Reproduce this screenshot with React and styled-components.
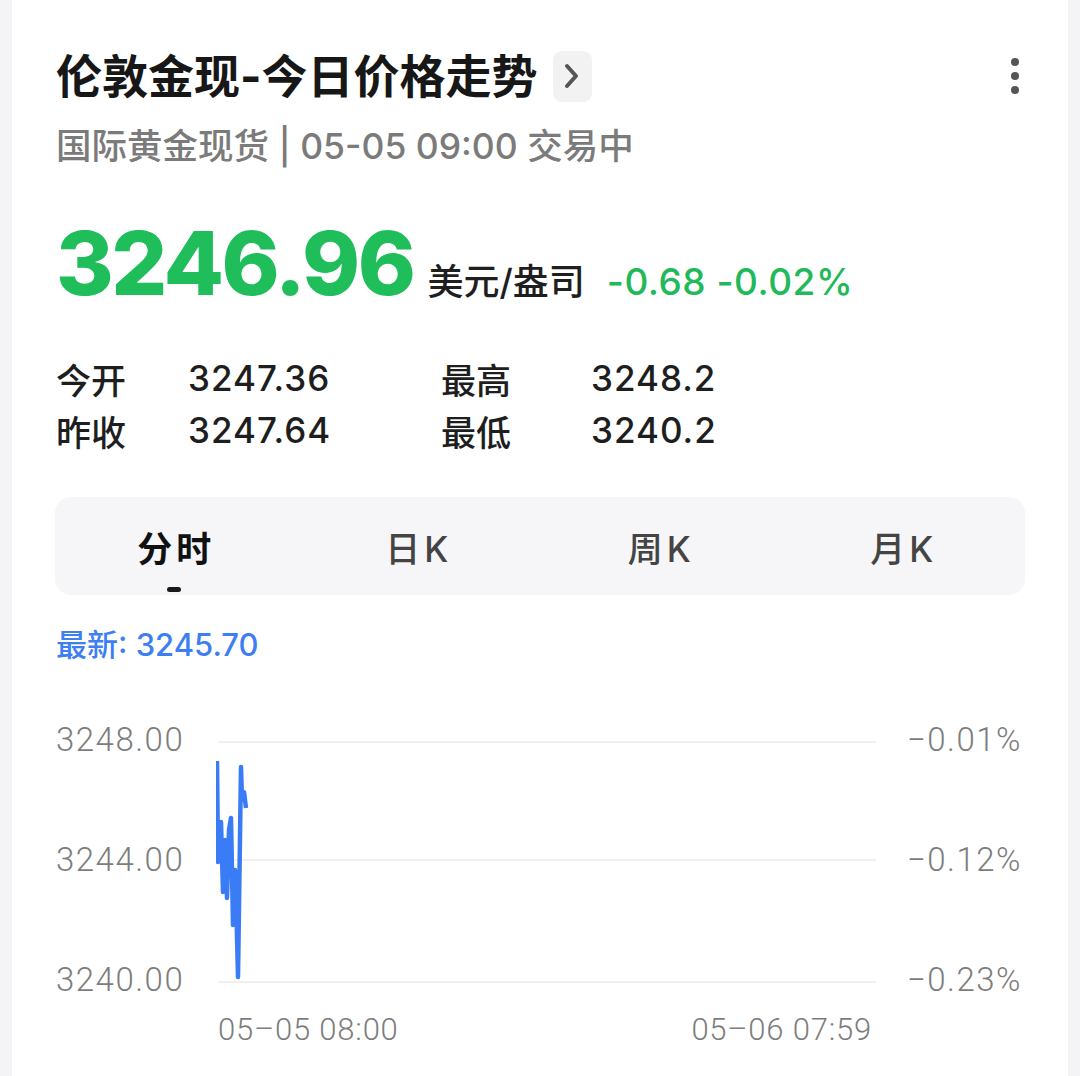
import React from "react";
import styled, { createGlobalStyle } from "styled-components";

const Global = createGlobalStyle`
  html, body { margin: 0; padding: 0; background: #f4f4f6; }
  body { font-family: Inter, "Noto Sans CJK SC", sans-serif; }
`;

const Card = styled.div`
  margin-left: 12px;
  width: 1056px;
  min-height: 1076px;
  box-sizing: border-box;
  background: #ffffff;
  padding: 50px 46px 0 44px;
  display: flex;
  flex-direction: column;
`;

const HeaderRow = styled.div`
  display: flex;
  align-items: center;
  justify-content: space-between;
  height: 52px;
`;

const TitleGroup = styled.div`
  display: flex;
  align-items: center;
  gap: 15px;
`;

const Title = styled.h1`
  margin: 0;
  font-family: Inter, "Noto Sans CJK SC", sans-serif;
  font-size: 46px;
  line-height: 52px;
  font-weight: 700;
  color: #171717;
`;

const ChevronBox = styled.div`
  width: 39px;
  height: 51px;
  border-radius: 9px;
  background: #f2f2f3;
  display: flex;
  align-items: center;
  justify-content: center;
`;

const MoreButton = styled.div`
  width: 24px;
  display: flex;
  justify-content: center;
  margin-right: -5px;
`;

const Subtitle = styled.div`
  margin-top: 23px;
  font-size: 35.5px;
  line-height: 44px;
  color: #7b7b7b;
  font-weight: 500;
`;

const PriceRow = styled.div`
  margin-top: 50px;
  display: flex;
  align-items: baseline;
`;

const BigPrice = styled.span`
  font-family: Inter, sans-serif;
  font-size: 88px;
  line-height: 88px;
  font-weight: 800;
  color: #1fbe5b;
  letter-spacing: -2.5px;
`;

const Unit = styled.span`
  margin-left: 14px;
  font-size: 36px;
  color: #1f1f1f;
  font-weight: 500;
`;

const Change = styled.span`
  margin-left: 22px;
  font-size: 37px;
  color: #22b95a;
  font-weight: 500;
  letter-spacing: 0.5px;
`;

const StatsGrid = styled.div`
  margin-top: 45px;
  display: grid;
  grid-template-columns: 132px 253px 150px auto;
  grid-auto-rows: 52px;
  align-items: center;
`;

const StatLabel = styled.span`
  font-size: 35px;
  color: #1e1e1e;
  font-weight: 500;
`;

const StatValue = styled.span`
  font-family: Inter, sans-serif;
  font-size: 35px;
  color: #1e1e1e;
  font-weight: 500;
  letter-spacing: 1px;
`;

const TabPanel = styled.div`
  margin-top: 41px;
  margin-left: -1px;
  margin-right: -3px;
  height: 98px;
  border-radius: 16px;
  background: #f6f6f8;
  display: grid;
  grid-template-columns: repeat(4, 1fr);
`;

const Tab = styled.div`
  position: relative;
  display: flex;
  align-items: center;
  justify-content: center;
  font-size: 35px;
  letter-spacing: 4px;
  color: ${(p) => (p.$active ? "#111111" : "#444444")};
  font-weight: ${(p) => (p.$active ? 700 : 500)};
`;

const TabIndicator = styled.span`
  position: absolute;
  bottom: 3px;
  left: 50%;
  margin-left: -9px;
  width: 14px;
  height: 5px;
  border-radius: 3px;
  background: #1a1a1a;
`;

const Latest = styled.div`
  margin-top: 30px;
  font-size: 31px;
  line-height: 40px;
  color: #3d7ff2;
  font-weight: 500;
`;

const Chart = styled.div`
  margin-top: 55px;
  display: grid;
  grid-template-columns: 160px 660px 1fr;
  grid-template-rows: 280px 36px;
  row-gap: 12px;
`;

const AxisColumn = styled.div`
  display: flex;
  flex-direction: column;
  gap: 80px;
  align-items: ${(p) => (p.$right ? "flex-end" : "flex-start")};
`;

const AxisLabel = styled.span`
  font-family: Roboto, "Liberation Sans", sans-serif;
  font-weight: 300;
  font-size: 33px;
  line-height: 40px;
  height: 40px;
  letter-spacing: 1.5px;
  color: #7d7d7d;
`;

const TimeRow = styled.div`
  grid-column: 2;
  display: flex;
  justify-content: space-between;
  padding-left: 2px;
  margin-right: 4px;
`;

const TimeLabel = styled.span`
  font-family: Roboto, "Liberation Sans", sans-serif;
  font-weight: 300;
  font-size: 31px;
  line-height: 36px;
  letter-spacing: 0.8px;
  color: #7d7d7d;
`;

const series = [
  [1, 3247.37], [2, 3244.0], [5, 3245.33], [7, 3243.0], [9, 3244.73],
  [10, 3244.07], [11, 3242.8], [13, 3245.07], [15, 3245.47], [17, 3241.9],
  [19, 3243.73], [20, 3242.9], [22, 3240.17], [25, 3247.17], [26, 3246.07],
  [28, 3246.33], [30, 3245.8],
];

const yOf = (price) => 22 + (3248 - price) * 30;

function PriceChart() {
  const d = series
    .map(([x, p], i) => `${i ? "L" : "M"}${x},${yOf(p).toFixed(1)}`)
    .join(" ");
  return (
    <svg width="660" height="280" viewBox="0 0 660 280">
      {[22, 140, 262].map((y) => (
        <line key={y} x1="2" x2="660" y1={y} y2={y} stroke="#f0f0f2" strokeWidth="2" />
      ))}
      <path d={d} fill="none" stroke="#3a7cf5" strokeWidth="4.5" strokeLinejoin="round" />
    </svg>
  );
}

export default function App() {
  return (
    <>
      <Global />
      <Card>
        <HeaderRow>
          <TitleGroup>
            <Title>伦敦金现-今日价格走势</Title>
            <ChevronBox>
              <svg width="18" height="26" viewBox="0 0 18 26">
                <path d="M4 3 L13 13 L4 23" fill="none" stroke="#555" strokeWidth="4" strokeLinecap="round" strokeLinejoin="round" />
              </svg>
            </ChevronBox>
          </TitleGroup>
          <MoreButton>
            <svg width="10" height="38" viewBox="0 0 10 38">
              <circle cx="5" cy="5" r="4" fill="#555" />
              <circle cx="5" cy="19" r="4" fill="#555" />
              <circle cx="5" cy="33" r="4" fill="#555" />
            </svg>
          </MoreButton>
        </HeaderRow>
        <Subtitle>国际黄金现货 | 05-05 09:00 交易中</Subtitle>
        <PriceRow>
          <BigPrice>3246.96</BigPrice>
          <Unit>美元/盎司</Unit>
          <Change>-0.68 -0.02%</Change>
        </PriceRow>
        <StatsGrid>
          <StatLabel>今开</StatLabel>
          <StatValue>3247.36</StatValue>
          <StatLabel>最高</StatLabel>
          <StatValue>3248.2</StatValue>
          <StatLabel>昨收</StatLabel>
          <StatValue>3247.64</StatValue>
          <StatLabel>最低</StatLabel>
          <StatValue>3240.2</StatValue>
        </StatsGrid>
        <TabPanel>
          <Tab $active>
            分时
            <TabIndicator />
          </Tab>
          <Tab>日K</Tab>
          <Tab>周K</Tab>
          <Tab>月K</Tab>
        </TabPanel>
        <Latest>最新: 3245.70</Latest>
        <Chart>
          <AxisColumn>
            <AxisLabel>3248.00</AxisLabel>
            <AxisLabel>3244.00</AxisLabel>
            <AxisLabel>3240.00</AxisLabel>
          </AxisColumn>
          <PriceChart />
          <AxisColumn $right>
            <AxisLabel>−0.01%</AxisLabel>
            <AxisLabel>−0.12%</AxisLabel>
            <AxisLabel>−0.23%</AxisLabel>
          </AxisColumn>
          <TimeRow>
            <TimeLabel>05–05 08:00</TimeLabel>
            <TimeLabel>05–06 07:59</TimeLabel>
          </TimeRow>
        </Chart>
      </Card>
    </>
  );
}
